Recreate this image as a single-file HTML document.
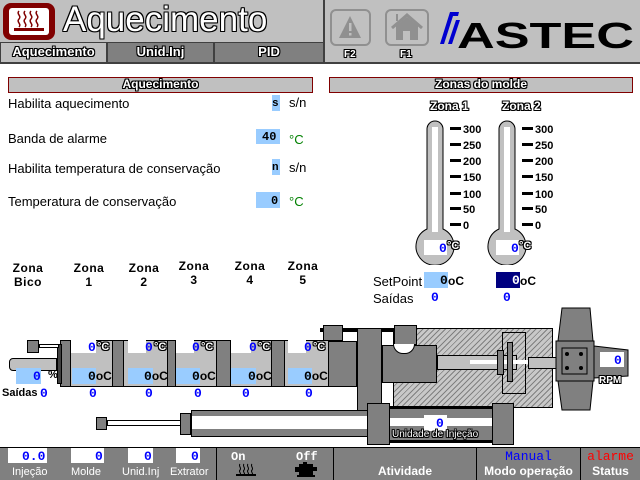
<!DOCTYPE html>
<html><head><meta charset="utf-8"><style>
*{margin:0;padding:0;box-sizing:border-box}
body{width:640px;height:480px;background:#fff;position:relative;overflow:hidden;font-family:"Liberation Sans",sans-serif}
.a{position:absolute;white-space:nowrap}
.g{background:#808080}
.lg{background:#c0c0c0}
.ol{color:#fff;font-weight:bold;text-shadow:-1px 0 #000,1px 0 #000,0 -1px #000,0 1px #000,1px 1px #000,-1px -1px #000,1px -1px #000,-1px 1px #000}
.bl{color:#00f;font-family:"Liberation Mono",monospace;font-weight:bold;font-size:13px}
.t{font-size:13px;color:#000}
.zb{font-weight:bold;font-size:12px;text-align:center;width:40px;line-height:14px;letter-spacing:0.5px}
.k{border:1px solid #000}
.hatch{background:repeating-linear-gradient(135deg,#808080 0 1px,#c8c8c8 1px 4px)}
.lbl{color:#fff;font-size:11px}
.oc{font:bold 13px 'Liberation Mono',monospace}
.oc span{font-family:'Liberation Sans';font-size:12px}
</style></head><body>
<!-- header -->
<div class="a lg" style="left:0;top:0;width:640px;height:64px"></div>
<div class="a" style="left:323px;top:0;width:2px;height:64px;background:#404040"></div>
<div class="a" style="left:0;top:62px;width:640px;height:2px;background:#404040"></div>
<div class="a" style="left:3px;top:3px;width:52px;height:37px;background:#800000;border-radius:8px"></div>
<div class="a" style="left:9px;top:8px;width:40px;height:27px;background:#fff;border-radius:3px"></div>
<svg class="a" style="left:9px;top:8px" width="40" height="27"><g stroke="#800000" stroke-width="1.5" fill="none"><path d="M10 3c-3 3 3 5 0 8s3 5 0 8"/><path d="M16 3c-3 3 3 5 0 8s3 5 0 8"/><path d="M22 3c-3 3 3 5 0 8s3 5 0 8"/><path d="M28 3c-3 3 3 5 0 8s3 5 0 8"/></g><rect x="5" y="20" width="30" height="3" fill="#800000"/></svg>
<div class="a ol" style="left:63px;top:0px;font-size:35px;line-height:40px;font-weight:normal">Aquecimento</div>
<div class="a lg" style="left:0;top:42px;width:107px;height:21px;border:1px solid #404040"></div>
<div class="a g" style="left:107px;top:42px;width:107px;height:21px;border:1px solid #404040"></div>
<div class="a g" style="left:214px;top:42px;width:110px;height:21px;border:1px solid #404040"></div>
<div class="a ol" style="left:0;top:44px;width:107px;text-align:center;font-size:13px">Aquecimento</div>
<div class="a ol" style="left:107px;top:44px;width:107px;text-align:center;font-size:13px">Unid.Inj</div>
<div class="a ol" style="left:214px;top:44px;width:110px;text-align:center;font-size:13px">PID</div>
<div class="a" style="left:330px;top:9px;width:41px;height:37px;border:2px solid #909090;border-radius:6px"></div>
<svg class="a" style="left:330px;top:9px" width="41" height="37"><path d="M20 7L31 29H9Z" fill="#909090"/><rect x="19" y="14" width="2.5" height="8" fill="#c0c0c0"/><rect x="19" y="24" width="2.5" height="2.5" fill="#c0c0c0"/></svg>
<div class="a" style="left:385px;top:9px;width:44px;height:37px;border:2px solid #909090;border-radius:6px"></div>
<svg class="a" style="left:385px;top:9px" width="44" height="37"><path d="M7 19L22 6L37 19" stroke="#909090" stroke-width="3" fill="none"/><path d="M11 17V31H33V17L22 8Z" fill="#909090"/><rect x="18" y="22" width="7" height="9" fill="#c0c0c0"/><rect x="11" y="5" width="2" height="7" fill="#909090"/></svg>
<div class="a ol" style="left:344px;top:49px;font-size:10px">F2</div>
<div class="a ol" style="left:400px;top:49px;font-size:10px">F1</div>
<svg class="a" style="left:439px;top:10px" width="30" height="36"><path d="M1 34L11 2H20L19 6H14L5 34Z" fill="#0000d0"/><path d="M9 34L17 10H21L13 34Z" fill="#0000d0"/></svg>
<div class="a" style="left:457px;top:16px;font-size:36px;font-weight:bold;color:#000;line-height:40px;transform:scaleX(1.45);transform-origin:left">ASTEC</div>
<!-- section headers -->
<div class="a lg" style="left:8px;top:77px;width:305px;height:16px;border:1px solid #800000"></div>
<div class="a ol" style="left:8px;top:77px;width:305px;text-align:center;font-size:12px">Aquecimento</div>
<div class="a lg" style="left:329px;top:77px;width:304px;height:16px;border:1px solid #800000"></div>
<div class="a ol" style="left:329px;top:77px;width:304px;text-align:center;font-size:12px">Zonas do molde</div>
<!-- rows -->
<div class="a t" style="left:8px;top:96px">Habilita aquecimento</div>
<div class="a t" style="left:8px;top:131px">Banda de alarme</div>
<div class="a t" style="left:8px;top:161px">Habilita temperatura de conservação</div>
<div class="a t" style="left:8px;top:194px">Temperatura de conservação</div>
<div class="a" style="left:272px;top:95px;width:8px;height:16px;background:#99ccff"></div>
<div class="a" style="left:256px;top:129px;width:24px;height:15px;background:#99ccff"></div>
<div class="a" style="left:272px;top:159px;width:8px;height:16px;background:#99ccff"></div>
<div class="a" style="left:256px;top:192px;width:24px;height:16px;background:#99ccff"></div>
<div class="a" style="left:272px;top:98px;font:bold 11px 'Liberation Mono',monospace">s</div>
<div class="a" style="left:262px;top:130px;font:bold 12px 'Liberation Mono',monospace">40</div>
<div class="a" style="left:272px;top:162px;font:bold 11px 'Liberation Mono',monospace">n</div>
<div class="a" style="left:271px;top:194px;font:bold 12px 'Liberation Mono',monospace">0</div>
<div class="a t" style="left:289px;top:95px">s/n</div>
<div class="a t" style="left:289px;top:132px;color:#008000">°C</div>
<div class="a t" style="left:289px;top:160px">s/n</div>
<div class="a t" style="left:289px;top:194px;color:#008000">°C</div>
<!-- zone labels -->
<div class="a zb" style="left:8px;top:261px">Zona<br>Bico</div>
<div class="a zb" style="left:69px;top:261px">Zona<br>1</div>
<div class="a zb" style="left:124px;top:261px">Zona<br>2</div>
<div class="a zb" style="left:174px;top:259px">Zona<br>3</div>
<div class="a zb" style="left:230px;top:259px">Zona<br>4</div>
<div class="a zb" style="left:283px;top:259px">Zona<br>5</div>
<!-- thermometers -->
<div class="a ol" style="left:430px;top:99px;font-size:12px">Zona 1</div>
<div class="a ol" style="left:502px;top:99px;font-size:12px">Zona 2</div>
<svg class="a" style="left:400px;top:115px" width="160" height="150">
<g fill="#c0c0c0" stroke="#000" stroke-width="1">
<path d="M27 14a8 8 0 0 1 16 0V114a19 19 0 1 1 -16 0Z"/>
<path d="M99 14a8 8 0 0 1 16 0V114a19 19 0 1 1 -16 0Z"/>
</g>
<rect x="32" y="12" width="6" height="105" fill="#fff"/>
<rect x="104" y="12" width="6" height="105" fill="#fff"/>
<rect x="24" y="125" width="23" height="15" fill="#fff"/>
<rect x="96" y="125" width="23" height="15" fill="#fff"/>
<g fill="#000"><rect x="50" y="12" width="11" height="3"/><rect x="50" y="28" width="11" height="3"/><rect x="50" y="44" width="11" height="3"/><rect x="50" y="60" width="11" height="3"/><rect x="50" y="77" width="11" height="3"/><rect x="50" y="92" width="11" height="3"/><rect x="50" y="108" width="11" height="3"/>
<rect x="122" y="12" width="11" height="3"/><rect x="122" y="28" width="11" height="3"/><rect x="122" y="44" width="11" height="3"/><rect x="122" y="60" width="11" height="3"/><rect x="122" y="77" width="11" height="3"/><rect x="122" y="92" width="11" height="3"/><rect x="122" y="108" width="11" height="3"/></g>
<g font-family="Liberation Sans" font-weight="bold" font-size="11"><text x="63" y="18">300</text><text x="63" y="34">250</text><text x="63" y="50">200</text><text x="63" y="66">150</text><text x="63" y="83">100</text><text x="63" y="98">50</text><text x="63" y="114">0</text>
<text x="135" y="18">300</text><text x="135" y="34">250</text><text x="135" y="50">200</text><text x="135" y="66">150</text><text x="135" y="83">100</text><text x="135" y="98">50</text><text x="135" y="114">0</text></g>
</svg>
<div class="a bl" style="left:439px;top:241px">0</div><div class="a ol" style="left:447px;top:240px;font-size:11px">°C</div>
<div class="a bl" style="left:511px;top:241px">0</div><div class="a ol" style="left:519px;top:240px;font-size:11px">°C</div>
<div class="a t" style="left:373px;top:274px">SetPoint</div>
<div class="a" style="left:424px;top:272px;width:24px;height:16px;background:#99ccff"></div>
<div class="a" style="left:496px;top:272px;width:24px;height:16px;background:#000080"></div>
<div class="a" style="left:440px;top:273px;font:bold 13px 'Liberation Mono',monospace">0</div>
<div class="a" style="left:448px;top:274px;font:bold 12px 'Liberation Sans'">oC</div>
<div class="a" style="left:512px;top:273px;font:bold 13px 'Liberation Mono',monospace;color:#fff">0</div>
<div class="a" style="left:520px;top:274px;font:bold 12px 'Liberation Sans'">oC</div>
<div class="a t" style="left:373px;top:291px">Saídas</div>
<div class="a bl" style="left:431px;top:290px">0</div>
<div class="a bl" style="left:503px;top:290px">0</div>
<!-- machine -->
<div class="a hatch k" style="left:393px;top:328px;width:160px;height:80px"></div>
<div class="a k" style="left:502px;top:332px;width:24px;height:62px"></div>
<div class="a" style="left:320px;top:328px;width:75px;height:4px;background:#000"></div>
<div class="a g k" style="left:323px;top:325px;width:20px;height:16px"></div>
<div class="a g k" style="left:357px;top:328px;width:25px;height:84px"></div>
<div class="a g k" style="left:394px;top:325px;width:23px;height:20px"></div>
<div class="a g k" style="left:382px;top:345px;width:55px;height:38px"></div>
<div class="a" style="left:393px;top:344px;width:22px;height:10px;background:#fff;border-radius:0 0 11px 11px;border:1px solid #000;border-top:none"></div>
<div class="a lg k" style="left:437px;top:355px;width:80px;height:15px"></div>
<div class="a" style="left:470px;top:360px;width:60px;height:4px;background:#fff"></div>
<div class="a g k" style="left:497px;top:350px;width:7px;height:25px"></div>
<div class="a g k" style="left:507px;top:342px;width:6px;height:40px"></div>
<div class="a lg k" style="left:528px;top:357px;width:30px;height:12px"></div>
<svg class="a" style="left:555px;top:306px" width="85" height="106"><path d="M7 2H35L38 35H3Z M3 75H38L35 104H7Z" fill="#808080" stroke="#000"/><rect x="1" y="35" width="38" height="40" fill="#808080" stroke="#000"/><rect x="7" y="42" width="25" height="26" fill="#808080" stroke="#000"/><circle cx="12" cy="48" r="2"/><circle cx="26" cy="48" r="2"/><circle cx="12" cy="62" r="2"/><circle cx="26" cy="62" r="2"/><path d="M39 40L73 44V70L39 72Z" fill="#808080" stroke="#000"/></svg>
<div class="a" style="left:600px;top:352px;width:24px;height:15px;background:#fff"></div>
<div class="a bl" style="left:614px;top:353px">0</div>
<div class="a ol" style="left:599px;top:375px;font-size:10px">RPM</div>
<!-- barrel -->
<div class="a lg" style="left:60px;top:340px;width:268px;height:47px;border-top:1px solid #000;border-bottom:1px solid #000"></div>
<div class="a g k" style="left:328px;top:341px;width:29px;height:46px"></div>
<div class="a g k" style="left:60px;top:340px;width:11px;height:47px"></div>
<div class="a g k" style="left:112px;top:340px;width:12px;height:47px"></div>
<div class="a g k" style="left:167px;top:340px;width:9px;height:47px"></div>
<div class="a g k" style="left:216px;top:340px;width:15px;height:47px"></div>
<div class="a g k" style="left:271px;top:340px;width:14px;height:47px"></div>
<div class="a k" style="left:57px;top:344px;width:5px;height:40px;background:#404040"></div>
<div class="a g k" style="left:27px;top:340px;width:12px;height:13px"></div>
<div class="a" style="left:39px;top:344px;width:20px;height:4px;background:#fff;border:1px solid #000"></div>
<div class="a lg k" style="left:9px;top:358px;width:48px;height:13px;border-radius:4px 0 0 4px"></div>
<div class="a" style="left:16px;top:368px;width:25px;height:16px;background:#99ccff"></div>
<div class="a bl" style="left:33px;top:369px">0</div><div class="a" style="left:48px;top:369px;font:bold 11px 'Liberation Sans'">%</div>
<div class="a" style="left:71px;top:340px;width:25px;height:13px;background:#fff"></div>
<div class="a" style="left:128px;top:340px;width:18px;height:13px;background:#fff"></div>
<div class="a" style="left:176px;top:340px;width:18px;height:13px;background:#fff"></div>
<div class="a" style="left:231px;top:340px;width:20px;height:13px;background:#fff"></div>
<div class="a" style="left:288px;top:340px;width:18px;height:13px;background:#fff"></div>
<div class="a bl" style="left:88px;top:340px">0</div><div class="a ol" style="left:97px;top:341px;font-size:11px">°C</div>
<div class="a bl" style="left:145px;top:340px">0</div><div class="a ol" style="left:154px;top:341px;font-size:11px">°C</div>
<div class="a bl" style="left:192px;top:340px">0</div><div class="a ol" style="left:201px;top:341px;font-size:11px">°C</div>
<div class="a bl" style="left:249px;top:340px">0</div><div class="a ol" style="left:258px;top:341px;font-size:11px">°C</div>
<div class="a bl" style="left:304px;top:340px">0</div><div class="a ol" style="left:313px;top:341px;font-size:11px">°C</div>
<div class="a" style="left:72px;top:368px;width:24px;height:16px;background:#99ccff"></div>
<div class="a" style="left:128px;top:368px;width:25px;height:16px;background:#99ccff"></div>
<div class="a" style="left:176px;top:368px;width:24px;height:16px;background:#99ccff"></div>
<div class="a" style="left:231px;top:368px;width:25px;height:16px;background:#99ccff"></div>
<div class="a" style="left:288px;top:368px;width:24px;height:16px;background:#99ccff"></div>
<div class="a oc" style="left:88px;top:369px">0<span>oC</span></div>
<div class="a oc" style="left:144px;top:369px">0<span>oC</span></div>
<div class="a oc" style="left:192px;top:369px">0<span>oC</span></div>
<div class="a oc" style="left:248px;top:369px">0<span>oC</span></div>
<div class="a oc" style="left:304px;top:369px">0<span>oC</span></div>
<div class="a" style="left:2px;top:387px;font:bold 11px 'Liberation Sans'">Saídas</div>
<div class="a bl" style="left:40px;top:386px">0</div>
<div class="a bl" style="left:89px;top:386px">0</div>
<div class="a bl" style="left:145px;top:386px">0</div>
<div class="a bl" style="left:194px;top:386px">0</div>
<div class="a bl" style="left:242px;top:386px">0</div>
<div class="a bl" style="left:305px;top:386px">0</div>
<!-- injection cylinder -->
<div class="a g k" style="left:96px;top:417px;width:11px;height:13px"></div>
<div class="a" style="left:107px;top:420px;width:74px;height:6px;background:#fff;border:1px solid #000"></div>
<div class="a g k" style="left:180px;top:413px;width:11px;height:22px"></div>
<div class="a g k" style="left:191px;top:410px;width:177px;height:27px"></div>
<div class="a" style="left:192px;top:416px;width:176px;height:13px;background:#fff"></div>
<div class="a" style="left:367px;top:406px;width:147px;height:37px;background:#808080;border-top:3px solid #000;border-bottom:3px solid #000"></div>
<div class="a" style="left:367px;top:418px;width:147px;height:8px;background:#fff"></div>
<div class="a g k" style="left:367px;top:403px;width:23px;height:42px"></div>
<div class="a g k" style="left:492px;top:403px;width:22px;height:42px"></div>
<div class="a" style="left:424px;top:415px;width:23px;height:16px;background:#fff"></div>
<div class="a bl" style="left:436px;top:416px">0</div>
<div class="a ol" style="left:392px;top:429px;font-size:10px;font-weight:normal">Unidade de Injeção</div>
<!-- bottom bar -->
<div class="a g" style="left:0;top:447px;width:640px;height:33px;border-top:1px solid #000"></div>
<div class="a" style="left:216px;top:447px;width:1px;height:33px;background:#000"></div>
<div class="a" style="left:333px;top:447px;width:1px;height:33px;background:#000"></div>
<div class="a" style="left:476px;top:447px;width:1px;height:33px;background:#000"></div>
<div class="a" style="left:580px;top:447px;width:1px;height:33px;background:#000"></div>
<div class="a" style="left:8px;top:448px;width:39px;height:15px;background:#fff"></div>
<div class="a" style="left:71px;top:448px;width:33px;height:15px;background:#fff"></div>
<div class="a" style="left:128px;top:448px;width:25px;height:15px;background:#fff"></div>
<div class="a" style="left:176px;top:448px;width:24px;height:15px;background:#fff"></div>
<div class="a bl" style="left:22px;top:449px">0.0</div>
<div class="a bl" style="left:95px;top:449px">0</div>
<div class="a bl" style="left:144px;top:449px">0</div>
<div class="a bl" style="left:191px;top:449px">0</div>
<div class="a lbl" style="left:12px;top:466px">Injeção</div>
<div class="a lbl" style="left:71px;top:466px">Molde</div>
<div class="a lbl" style="left:122px;top:466px">Unid.Inj</div>
<div class="a lbl" style="left:170px;top:466px">Extrator</div>
<div class="a" style="left:231px;top:450px;font:bold 12px 'Liberation Mono',monospace;color:#fff">On</div>
<div class="a" style="left:296px;top:450px;font:bold 12px 'Liberation Mono',monospace;color:#fff">Off</div>
<svg class="a" style="left:235px;top:463px" width="22" height="14"><g stroke="#000" fill="none"><path d="M5 1c-2 2 2 4 0 6s2 3 0 5"/><path d="M9 1c-2 2 2 4 0 6s2 3 0 5"/><path d="M13 1c-2 2 2 4 0 6s2 3 0 5"/><path d="M17 1c-2 2 2 4 0 6s2 3 0 5"/></g><rect x="1" y="11" width="20" height="2"/></svg>
<svg class="a" style="left:294px;top:462px" width="24" height="16"><rect x="5" y="2" width="14" height="11"/><rect x="1" y="5" width="4" height="5"/><rect x="19" y="5" width="4" height="4"/><rect x="9" y="0" width="4" height="2"/><rect x="3" y="13" width="18" height="2"/></svg>
<div class="a" style="left:334px;top:464px;width:142px;text-align:center;color:#fff;font-weight:bold;font-size:12px">Atividade</div>
<div class="a" style="left:477px;top:449px;width:103px;text-align:center;color:#00f;font:13px 'Liberation Mono',monospace">Manual</div>
<div class="a" style="left:477px;top:464px;width:103px;text-align:center;color:#fff;font-weight:bold;font-size:12px">Modo operação</div>
<div class="a" style="left:581px;top:449px;width:59px;text-align:center;color:#f00;font:13px 'Liberation Mono',monospace">alarme</div>
<div class="a" style="left:581px;top:464px;width:59px;text-align:center;color:#fff;font-weight:bold;font-size:12px">Status</div>
</body></html>
